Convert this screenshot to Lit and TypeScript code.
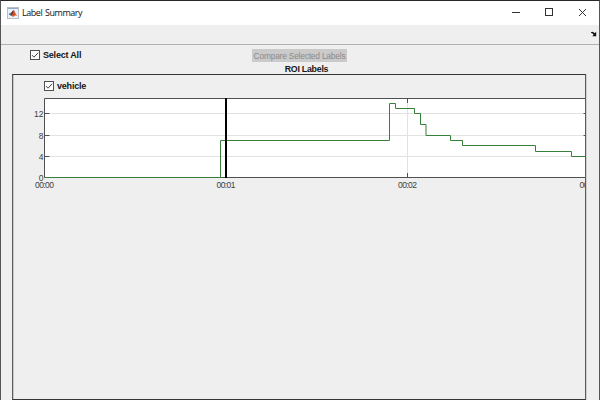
import { LitElement, html, svg, css } from "lit";
import { customElement, property } from "lit/decorators.js";

const UNIT = 5.33;
const BASE = 79.9;
const valueY = (v: number) => Math.floor(BASE - v * UNIT) + 0.5;

/* [x where the count changes, new count] */
const COUNTS: [number, number][] = [
  [0.5, 0], [176.5, 7], [345.5, 14], [351.5, 13], [370.5, 12], [376.5, 10],
  [382, 8], [406.5, 7], [418.5, 6], [491.5, 5], [527.5, 4],
];

@customElement("label-checkbox")
export class LabelCheckbox extends LitElement {
  @property() label = "";
  static styles = css`
    :host { display: flex; align-items: center; gap: 3px; height: 12px;
      font: bold 9px/12px "Liberation Sans", Arial, sans-serif; letter-spacing: -0.2px; color: #161616; }
    svg { display: block; flex: none; }
    span { white-space: nowrap; }
  `;
  render() {
    return html`<svg width="10" height="10" viewBox="0 0 10 10">
        <rect x=".5" y=".5" width="9" height="9" fill="#fff" stroke="#505050" />
        <path d="M2 5.1 4 7.2 8.2 2.7" fill="none" stroke="#444" stroke-width="1" />
      </svg><span>${this.label}</span>`;
  }
}

@customElement("count-chart")
export class CountChart extends LitElement {
  static styles = css`
    :host { display: block; }
    svg { display: block; }
    text { font: 8.5px "Liberation Sans", Arial, sans-serif; fill: #404040; }
    .grid { stroke: #e2e2e2; }
    .axis { stroke: #505050; fill: none; }
    .series { stroke: #38803a; fill: none; }
  `;
  render() {
    const path = COUNTS.map(([x, v], i) => (i ? `H${x}V${valueY(v)}` : `M${x} ${valueY(v)}`)).join("") + "H542";
    return html`<svg width="572" height="97" viewBox="-31 0 572 97">
      <rect x="0" y="0" width="542" height="80" fill="#fff" />
      ${[4, 8, 12].map((v) => svg`<path class="grid" d="M1 ${valueY(v)}H541" />`)}
      <path class="grid" d="M363.5 1V79" />
      <path class="axis" d="M541 .5H.5V79.5H541M363.5 0V5M363.5 80V75" />
      ${[4, 8, 12].map((v) => svg`<path class="axis" d="M0 ${valueY(v)}H5.5M539.5 ${valueY(v)}H541" />`)}
      <path class="series" d="${path}" />
      <path d="M182 0V80" stroke="#000" stroke-width="2" />
      ${[0, 4, 8, 12].map((v) => svg`<text x="-0.5" y="${valueY(v) + 3}" text-anchor="end">${v}</text>`)}
      ${[0, 1, 2, 3].map((s) => svg`<text x="${0.5 + s * 181.5}" y="90" text-anchor="middle" textLength="19">00:0${s}</text>`)}
    </svg>`;
  }
}

@customElement("app-root")
export class AppRoot extends LitElement {
  static styles = css`
    :host { display: flex; flex-direction: column; box-sizing: border-box; width: 600px; height: 400px;
      overflow: hidden; background: #efefef; border: 1px solid #555; border-top-color: #2b2728; border-bottom: 0;
      font-family: "Liberation Sans", Arial, sans-serif; }
    .titlebar { display: flex; align-items: center; height: 24px; flex: none; background: #fff; padding: 0 13px 0 6px;
      box-sizing: border-box; }
    .title { flex: 1; margin-left: 3px; font: 9px/12px "Open Sans", "Noto Sans", sans-serif; color: #111;
      letter-spacing: -0.45px; word-spacing: 0.8px; }
    .controls { display: block; }
    .toolbar { display: flex; justify-content: flex-end; align-items: center; height: 20px; flex: none;
      box-sizing: border-box; border-bottom: 1px solid #b2b2b2; padding: 0 2px 1px 0; }
    .actions { display: grid; grid-template-columns: 222px 95px 1fr; height: 19px; flex: none; padding: 4px 0 0 29px;
      box-sizing: border-box; }
    .compare { height: 13px; box-sizing: border-box; border: 0; padding: 1px 0 0; background: #cacaca; color: #8b8b8b;
      font: 8.4px/13px "Liberation Sans", Arial, sans-serif; letter-spacing: -0.2px; white-space: nowrap;
      text-align: center; }
    .heading { height: 10px; flex: none; margin: 0; padding-left: 23px; width: 588px; box-sizing: border-box;
      text-align: center; font: bold 8.8px/11px "Liberation Sans", Arial, sans-serif; letter-spacing: -0.25px;
      color: #161616; }
    .panel { flex: 1; box-sizing: border-box; width: 574px; margin-left: 11px; border: 1px solid #353535;
      border-left-color: #5c5c5c; border-right-color: #5c5c5c; padding: 5px 0 0; overflow: hidden;
      box-shadow: 1px 0 #cfcfcf, inset 1px 0 #c8c8c8; }
    .row { padding-left: 31px; margin-bottom: 6px; display: flex; }
  `;
  render() {
    return html`
      <div class="titlebar">
        <svg width="12" height="12" viewBox="0 0 12 12">
          <rect x=".5" y=".5" width="11" height="11" fill="#edf1f5" stroke="#b5bfcb" />
          <path d="M1 1H11V2H1Z" fill="#91aac6" />
          <path d="M1.5 7 4.2 5.5 6.5 3 5.8 7.8 4 9Z" fill="#4478a4" />
          <path d="M6.5 2.7C8 4 8.3 7 10.5 9L8.5 8.3 6 10 4.5 8.2 5.6 6.5Z" fill="#d45422" />
          <path d="M6.4 3 6.1 6.5 4.3 8.4 3.6 7.3Z" fill="#762b25" />
        </svg>
        <span class="title">Label Summary</span>
        <svg class="controls" width="74" height="10" viewBox="0 0 74 10" fill="none" stroke="#333">
          <path d="M0 4.5H8" />
          <rect x="33.5" y=".5" width="7" height="7" />
          <path d="M67 1 74 8M74 1 67 8" />
        </svg>
      </div>
      <div class="toolbar">
        <svg width="6" height="6" viewBox="0 0 6 6">
          <path d="M0 1.2Q2-.2 3.7 2.2L5.2.8V5.2H1.4L2.6 3.5Q1.5 1.8 0 2Z" fill="#111" />
        </svg>
      </div>
      <div class="actions">
        <label-checkbox label="Select All"></label-checkbox>
        <button class="compare" disabled>Compare Selected Labels</button>
      </div>
      <h2 class="heading">ROI Labels</h2>
      <div class="panel">
        <div class="row"><label-checkbox label="vehicle"></label-checkbox></div>
        <count-chart></count-chart>
      </div>`;
  }
}
